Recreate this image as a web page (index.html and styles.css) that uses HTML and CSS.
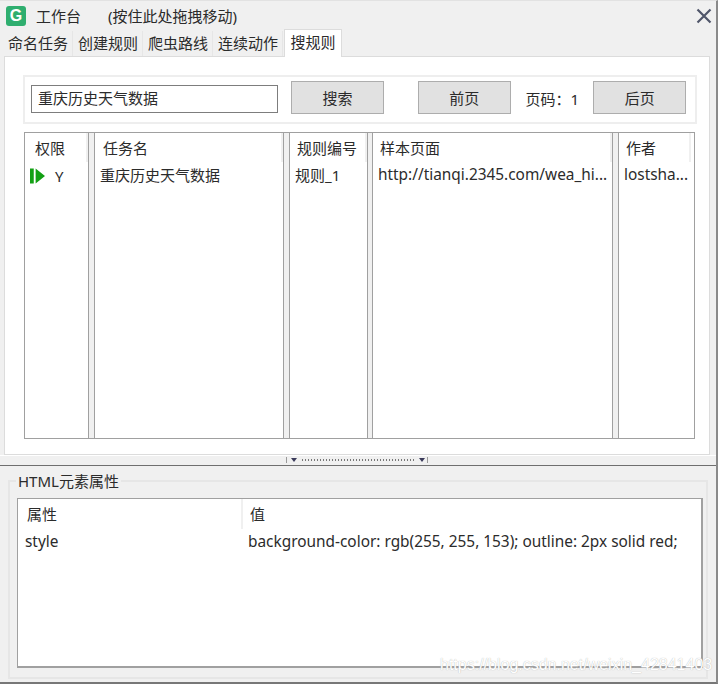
FILE: index.html
```html
<!DOCTYPE html>
<html lang="zh">
<head>
<meta charset="utf-8">
<title>工作台</title>
<link rel="stylesheet" href="styles.css">
</head>
<body>
<div class="window">
  <header class="titlebar">
    <span class="logo">G</span>
    <span class="title">工作台</span>
    <span class="hint">(按住此处拖拽移动)</span>
    <svg class="close" viewBox="0 0 16 16" width="16" height="16"><path d="M1.5 1.5 14.5 14.5M14.5 1.5 1.5 14.5"/></svg>
  </header>
  <nav class="tabs">
    <span class="tab">命名任务</span>
    <span class="tab">创建规则</span>
    <span class="tab">爬虫路线</span>
    <span class="tab">连续动作</span>
    <span class="tab active">搜规则</span>
  </nav>
  <main class="pane">
    <div class="toolbar">
      <div class="search-input">重庆历史天气数据</div>
      <button class="btn">搜索</button>
      <button class="btn prev">前页</button>
      <span class="page">页码：1</span>
      <button class="btn">后页</button>
    </div>
    <div class="rules">
      <div class="col c1"><div class="head">权限</div><div class="cell perm"><svg viewBox="0 0 16 16" width="16" height="16"><path class="green" d="M0 0h4v16H0zM6 0l10 8-10 8z"/></svg><span>Y</span></div></div>
      <div class="split"></div>
      <div class="col c2"><div class="head">任务名</div><div class="cell">重庆历史天气数据</div></div>
      <div class="split"></div>
      <div class="col c3"><div class="head">规则编号</div><div class="cell">规则_1</div></div>
      <div class="split narrow"></div>
      <div class="col c4"><div class="head">样本页面</div><div class="cell url">http://tianqi.2345.com/wea_hi...</div></div>
      <div class="split"></div>
      <div class="col c5"><div class="head">作者</div><div class="cell url">lostsha...</div></div>
    </div>
  </main>
  <div class="splitter">
    <span class="grip">
      <i class="arrow"></i><i class="dots"></i><i class="arrow"></i>
    </span>
  </div>
  <section class="group">
    <div class="legend">HTML元素属性</div>
    <div class="attrs">
      <div class="attr-head"><span class="a1">属性</span><span class="a2">值</span></div>
      <div class="attr-row"><span class="a1">style</span><span class="a2">background-color: rgb(255, 255, 153); outline: 2px solid red;</span></div>
    </div>
  </section>
  <div class="watermark">https://blog.csdn.net/weixin_42841403</div>
</div>
</body>
</html>
```

FILE: styles.css
```css
* { box-sizing: border-box; }
html, body { margin: 0; padding: 0; }
body {
  width: 719px;
  height: 685px;
  overflow: hidden;
  background: #fff;
  font-family: "Noto Sans", "Noto Sans CJK SC", sans-serif;
  font-size: 15px;
  color: #2b2b2b;
}
.window {
  position: relative;
  width: 718px;
  height: 684px;
  padding: 1px 3px 2px 0;
  background: #f0f0f0;
  border-top: 1px solid #e2e2e2;
  border-right: 2px solid #8a8a8a;
  border-bottom: 2px solid #777;
  display: flex;
  flex-direction: column;
}
.titlebar {
  height: 27px;
  display: flex;
  align-items: center;
  padding-left: 6px;
  flex: none;
}
.logo {
  width: 20px;
  height: 20px;
  border-radius: 3px;
  background: #2fae6f;
  color: #fff;
  font: bold 16px/20px "Liberation Sans", sans-serif;
  text-align: center;
}
.title { margin-left: 10px; }
.hint { margin-left: 27px; }
.close { margin-left: auto; margin-right: 1px; fill: none; }
.close path { stroke: #50566a; stroke-width: 2.2; }
.tabs {
  display: flex;
  height: 27px;
  padding-left: 4px;
  gap: 1px;
  flex: none;
}
.tab {
  width: 69px;
  text-align: center;
  line-height: 25px;
  background: #f0f0f0;
  margin-top: 2px;
  border-right: 1px solid #e6e6e6;
}
.tab.active {
  width: 58px;
  margin-top: 0;
  background: #fff;
  border: 1px solid #dcdcdc;
  border-bottom: 0;
  position: relative;
  z-index: 1;
  height: 28px;
}
.pane {
  height: 399px;
  margin: 0 3px 0 4px;
  padding: 18px 16px 0 18px;
  background: #fff;
  border: 1px solid #dcdcdc;
  flex: none;
}
.toolbar {
  width: 674px;
  height: 49px;
  border: 2px solid #eeeeee;
  display: flex;
  align-items: center;
  padding: 0 9px 0 6px;
}
.search-input {
  width: 248px;
  height: 28px;
  margin-top: -1px;
  border: 1px solid #7d7d7d;
  line-height: 25px;
  padding-left: 6px;
  background: #fff;
}
.btn {
  width: 93px;
  height: 33px;
  margin-left: 13px;
  margin-top: -5px;
  background: #e1e1e1;
  border: 1px solid #adadad;
  font: inherit;
  color: inherit;
  padding: 0;
}
.btn.prev { margin-left: 34px; }
.page { margin-left: 15px; margin-top: -2px; width: 68px; margin-right: -13px; white-space: nowrap; }
.rules {
  width: 671px;
  height: 307px;
  margin-top: 8px;
  margin-left: 1px;
  border: 1px solid #a0a0a0;
  display: flex;
}
.split {
  width: 7px;
  flex: none;
  background: #f0f0f0;
  border-left: 1px solid #a0a0a0;
  border-right: 1px solid #a0a0a0;
}
.split.narrow { width: 6px; }
.col { flex: none; min-width: 0; }
.c1 { width: 63px; }
.c2 { width: 188px; }
.c3 { width: 77px; }
.c4 { width: 239px; }
.c5 { width: 75px; }
.head {
  height: 29px;
  line-height: 30px;
  padding-left: 10px;
  white-space: nowrap;
  border-right: 2px solid #f0f0f0;
}
.c2 .head { padding-left: 8px; }
.c3 .head { padding-left: 7px; }
.c4 .head { padding-left: 7px; }
.c5 .head { padding-left: 7px; margin-right: 3px; }
.cell {
  height: 27px;
  line-height: 26px;
  padding-left: 5px;
  white-space: nowrap;
  overflow: hidden;
}
.url { font-size: 15.4px; }
.perm { display: flex; align-items: center; padding-left: 5px; }
.perm svg { width: 15px; height: 16px; }
.green { fill: #13a014; }
.perm span { margin-left: 10px; }
.splitter {
  height: 11px;
  flex: none;
  border-bottom: 1px solid #6f6f6f;
  display: flex;
  justify-content: center;
  margin-right: -3px;
  padding-right: 3px;
  box-shadow: inset 0 1px 0 #fff;
}
.grip {
  display: flex;
  align-items: center;
  gap: 5px;
  height: 6px;
  margin-top: 2px;
  padding: 0 2px 0 4px;
  border-left: 1px solid #9a9a9a;
  border-right: 1px solid #9a9a9a;
}
.arrow {
  width: 0;
  height: 0;
  border-left: 3.5px solid transparent;
  border-right: 3.5px solid transparent;
  border-top: 4px solid #3a3a5a;
}
.dots {
  width: 112px;
  height: 2px;
  background: repeating-linear-gradient(90deg, #777 0 1px, transparent 1px 3px);
}
.group {
  position: relative;
  height: 199px;
  margin: 14px 5px 0 8px;
  padding: 16px 7px 0 7px;
  border: 2px solid #e6e6e6;
  flex: none;
}
.legend {
  position: absolute;
  top: -11px;
  left: 6px;
  padding: 0 2px;
  background: #f0f0f0;
  line-height: 20px;
}
.attrs {
  width: 686px;
  height: 170px;
  background: #fff;
  border: 1px solid #a0a0a0;
  border-bottom-width: 2px;
  border-right-width: 2px;
}
.attr-head, .attr-row { display: flex; white-space: nowrap; }
.attr-head { height: 30px; line-height: 30px; }
.attr-row { height: 27px; line-height: 26px; }
.attr-head .a1 { width: 225px; padding-left: 9px; border-right: 2px solid #f0f0f0; }
.attr-head .a2 { padding-left: 7px; }
.attr-row .a1 { width: 225px; padding-left: 7px; font-size: 15.4px; }
.attr-row .a2 { padding-left: 5px; font-size: 15.4px; }
.watermark {
  position: absolute;
  left: 440px;
  top: 655px;
  font: 16px/18px "Liberation Sans", sans-serif;
  color: #fff;
  text-shadow: 0 0 1px #a8a8a8;
}
```
